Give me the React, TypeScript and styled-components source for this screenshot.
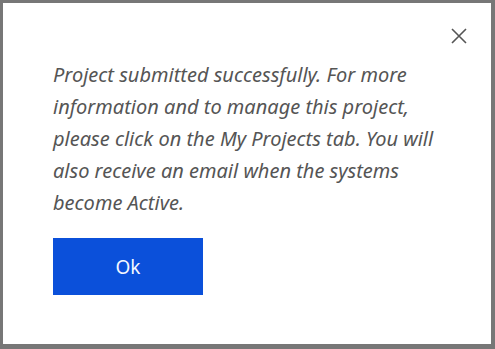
import React, {ReactElement} from "react";
import styled, {createGlobalStyle} from "styled-components";

const GlobalStyle = createGlobalStyle`
    html, body {
        margin: 0;
        padding: 0;
        height: 100%;
    }
    body {
        font-family: "Noto Sans", "Open Sans", sans-serif;
    }
`;

const Overlay = styled.div`
    width: 495px;
    height: 349px;
    box-sizing: border-box;
    background-color: #777777;
    padding: 3px 4px 5px 3px;
    display: flex;
`;

const Modal = styled.div`
    position: relative;
    flex: 1;
    background-color: #ffffff;
    padding: 56px 40px 0 50px;
    display: flex;
    flex-direction: column;
    align-items: flex-start;
`;

const CloseButton = styled.button`
    position: absolute;
    top: 21px;
    right: 20px;
    width: 24px;
    height: 24px;
    padding: 0;
    border: none;
    background: transparent;
    cursor: pointer;
    display: flex;
    align-items: center;
    justify-content: center;
`;

const Message = styled.p`
    margin: 0;
    max-width: 392px;
    font-size: 20px;
    font-style: italic;
    line-height: 32px;
    color: #555555;
`;

const OkButton = styled.button`
    margin-top: 19px;
    width: 150px;
    height: 57px;
    border: none;
    background-color: #0b50da;
    color: #f4f7ff;
    font-family: "Noto Sans", sans-serif;
    font-size: 19px;
    cursor: pointer;
`;

const App: React.FC<{}> = (): ReactElement => {
    return (
        <>
            <GlobalStyle />
            <Overlay>
                <Modal>
                    <CloseButton aria-label="Close">
                        <svg width="16" height="16" viewBox="0 0 16 16">
                            <path d="M1 1 L15 15 M15 1 L1 15" stroke="#555" strokeWidth="1.6" fill="none" />
                        </svg>
                    </CloseButton>
                    <Message>
                        Project submitted successfully. For more information and to manage this project,
                        please click on the My Projects tab. You will also receive an email when the systems
                        become Active.
                    </Message>
                    <OkButton>Ok</OkButton>
                </Modal>
            </Overlay>
        </>
    )
}

export default App;
